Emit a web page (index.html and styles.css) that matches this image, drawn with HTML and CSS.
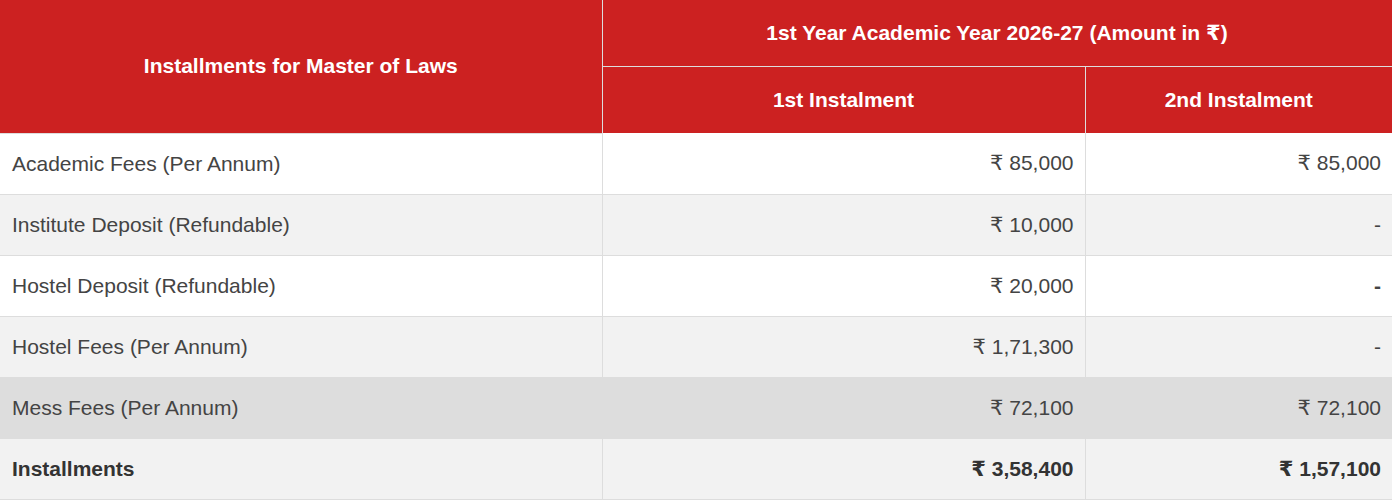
FILE: index.html
```html
<!DOCTYPE html>
<html>
<head>
<meta charset="utf-8">
<link rel="stylesheet" href="styles.css">
</head>
<body>
<table class="fees">
  <colgroup>
    <col class="c1">
    <col class="c2">
    <col class="c3">
  </colgroup>
  <thead>
    <tr class="hrow1">
      <th rowspan="2">Installments for Master of Laws</th>
      <th colspan="2">1st Year Academic Year 2026-27 (Amount in ₹)</th>
    </tr>
    <tr class="hrow2">
      <th>1st Instalment</th>
      <th class="last">2nd Instalment</th>
    </tr>
  </thead>
  <tbody>
    <tr class="odd">
      <td>Academic Fees (Per Annum)</td>
      <td class="num">₹ 85,000</td>
      <td class="num last">₹ 85,000</td>
    </tr>
    <tr class="even">
      <td>Institute Deposit (Refundable)</td>
      <td class="num">₹ 10,000</td>
      <td class="num last">-</td>
    </tr>
    <tr class="odd">
      <td>Hostel Deposit (Refundable)</td>
      <td class="num">₹ 20,000</td>
      <td class="num last"><b>-</b></td>
    </tr>
    <tr class="even">
      <td>Hostel Fees (Per Annum)</td>
      <td class="num">₹ 1,71,300</td>
      <td class="num last">-</td>
    </tr>
    <tr class="hover">
      <td>Mess Fees (Per Annum)</td>
      <td class="num">₹ 72,100</td>
      <td class="num last">₹ 72,100</td>
    </tr>
    <tr class="even total">
      <td>Installments</td>
      <td class="num">₹ 3,58,400</td>
      <td class="num last">₹ 1,57,100</td>
    </tr>
  </tbody>
</table>
</body>
</html>
```

FILE: styles.css
```css
html, body {
  margin: 0;
  padding: 0;
  background: #ffffff;
}

.fees {
  width: 1392px;
  border-collapse: collapse;
  table-layout: fixed;
  font-family: "Liberation Sans", Arial, "DejaVu Sans", sans-serif;
}

.c1 { width: 602px; }
.c2 { width: 483px; }
.c3 { width: 307px; }

.fees th {
  background: #cc2121;
  color: #ffffff;
  font-size: 21px;
  font-weight: bold;
  text-align: center;
  vertical-align: middle;
  padding: 0 12px;
  border-right: 1px solid #dddddd;
  border-bottom: 1px solid #dddddd;
}

.fees thead tr:last-child th {
  border-bottom: none;
}

.fees th.last { border-right: none; }

.hrow1 { height: 66px; }
.hrow2 { height: 67px; }

.fees td {
  height: 60px;
  padding: 0 11px 0 12px;
  font-size: 21px;
  color: #444444;
  vertical-align: middle;
  border-right: 1px solid #dddddd;
  border-bottom: 1px solid #dddddd;
}

.fees td.last { border-right: none; }

.fees td.num { text-align: right; }

.odd td { background: #ffffff; }
.even td { background: #f2f2f2; }
.hover td { background: #dddddd; }

.total td {
  font-weight: bold;
  color: #333333;
}
```
